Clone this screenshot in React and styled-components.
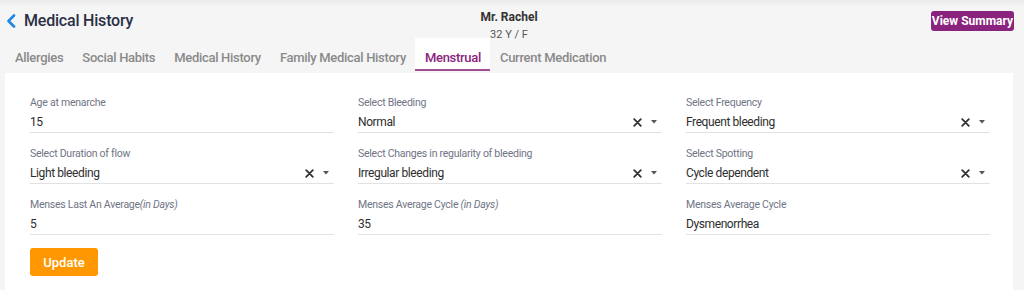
import React from "react";
import styled, { createGlobalStyle } from "styled-components";

const GlobalStyle = createGlobalStyle`
  body {
    margin: 0;
    background: #f5f5f5;
    font-family: Roboto, "Liberation Sans", Arial, sans-serif;
  }
`;

const Page = styled.div`
  width: 1024px;
  height: 290px;
  overflow: hidden;
  background: linear-gradient(#ebebeb 0px, #f5f5f5 7px);
  padding: 0 11px 0 5px;
  box-sizing: border-box;
`;

const Header = styled.div`
  display: grid;
  grid-template-columns: 1fr auto 1fr;
  align-items: start;
  height: 38px;
`;

const Title = styled.div`
  display: flex;
  align-items: center;
  gap: 8px;
  padding-top: 11px;
  font-size: 16px;
  font-weight: 500;
  letter-spacing: -0.2px;
  color: #2b2f45;

  svg {
    margin-left: 1px;
  }
`;

const Patient = styled.div`
  text-align: center;
  padding-top: 10px;
  font-size: 12px;
  color: #333;

  b {
    display: block;
    line-height: 15px;
    font-weight: 700;
  }
  span {
    display: block;
    margin-top: 2px;
    line-height: 16px;
    font-size: 11px;
    color: #555;
  }
`;

const Actions = styled.div`
  display: flex;
  justify-content: flex-end;
  padding-top: 11px;
`;

const SummaryButton = styled.button`
  background: #8a237d;
  color: #fff;
  border: none;
  border-radius: 3px;
  height: 20px;
  padding: 0 1px;
  font-family: inherit;
  font-size: 12px;
  font-weight: 700;
  margin-right: -1px;
`;

const Tabs = styled.div`
  display: flex;
  height: 33px;
`;

const Tab = styled.div`
  padding: 12px 9px 0 10px;
  font-size: 13px;
  font-weight: 500;
  letter-spacing: -0.3px;
  color: ${(p) => (p.$active ? "#8a237d" : "#8a8a8a")};
  background: ${(p) => (p.$active ? "#fff" : "transparent")};
  border-bottom: 2px solid ${(p) => (p.$active ? "#a04d96" : "transparent")};
  box-sizing: border-box;
  height: 33px;
`;

const Card = styled.div`
  margin-top: 2px;
  background: #fff;
  padding: 23px 23px 20px 25px;
  min-height: 230px;
  box-sizing: border-box;
`;

const Grid = styled.div`
  display: grid;
  grid-template-columns: repeat(3, 304px);
  column-gap: 24px;
  row-gap: 14px;
`;

const Field = styled.div`
  display: flex;
  flex-direction: column;
`;

const Label = styled.label`
  font-size: 10.5px;
  letter-spacing: -0.25px;
  color: #6f7484;
  line-height: 14px;
  height: 14px;

  i {
    font-style: italic;
  }
`;

const Value = styled.div`
  display: flex;
  align-items: center;
  justify-content: space-between;
  margin-top: 3px;
  height: 18px;
  padding-bottom: 1px;
  border-bottom: 1px solid #e2e2e2;
  font-size: 12px;
  letter-spacing: -0.4px;
  color: #2e2e2e;
`;

const Controls = styled.div`
  display: flex;
  align-items: center;
  gap: 9px;
  margin-right: 5px;
`;

const UpdateButton = styled.button`
  margin-top: 13px;
  background: #ff9800;
  color: #fff;
  border: none;
  border-radius: 3px;
  width: 68px;
  height: 28px;
  font-family: inherit;
  font-size: 13px;
  font-weight: 500;
`;

const Chevron = () => (
  <svg width="10" height="14" viewBox="0 0 10 14">
    <path d="M8 1.5 L2.5 7 L8 12.5" fill="none" stroke="#1e88e5" strokeWidth="2.6" strokeLinecap="round" strokeLinejoin="round" />
  </svg>
);

const ClearIcon = () => (
  <svg width="9" height="9" viewBox="0 0 9 9">
    <path d="M1.2 1.2 L7.8 7.8 M7.8 1.2 L1.2 7.8" stroke="#333" strokeWidth="1.8" strokeLinecap="round" />
  </svg>
);

const Caret = () => (
  <svg width="6" height="4" viewBox="0 0 6 4">
    <path d="M0 0 H6 L3 3.5 Z" fill="#555" />
  </svg>
);

const tabs = ["Allergies", "Social Habits", "Medical History", "Family Medical History", "Menstrual", "Current Medication"];

const fields = [
  { label: "Age at menarche", value: "15" },
  { label: "Select Bleeding", value: "Normal", select: true },
  { label: "Select Frequency", value: "Frequent bleeding", select: true },
  { label: "Select Duration of flow", value: "Light bleeding", select: true },
  { label: "Select Changes in regularity of bleeding", value: "Irregular bleeding", select: true },
  { label: "Select Spotting", value: "Cycle dependent", select: true },
  { label: "Menses Last An Average", hint: "(in Days)", value: "5" },
  { label: "Menses Average Cycle ", hint: "(in Days)", value: "35" },
  { label: "Menses Average Cycle", value: "Dysmenorrhea" },
];

export default function App() {
  return (
    <>
      <GlobalStyle />
      <Page>
        <Header>
          <Title>
            <Chevron />
            Medical History
          </Title>
          <Patient>
            <b>Mr. Rachel</b>
            <span>32 Y / F</span>
          </Patient>
          <Actions>
            <SummaryButton>View Summary</SummaryButton>
          </Actions>
        </Header>
        <Tabs>
          {tabs.map((t) => (
            <Tab key={t} $active={t === "Menstrual"}>
              {t}
            </Tab>
          ))}
        </Tabs>
        <Card>
          <Grid>
            {fields.map((f, i) => (
              <Field key={i}>
                <Label>
                  {f.label}
                  {f.hint && <i>{f.hint}</i>}
                </Label>
                <Value>
                  <span>{f.value}</span>
                  {f.select && (
                    <Controls>
                      <ClearIcon />
                      <Caret />
                    </Controls>
                  )}
                </Value>
              </Field>
            ))}
          </Grid>
          <UpdateButton>Update</UpdateButton>
        </Card>
      </Page>
    </>
  );
}
